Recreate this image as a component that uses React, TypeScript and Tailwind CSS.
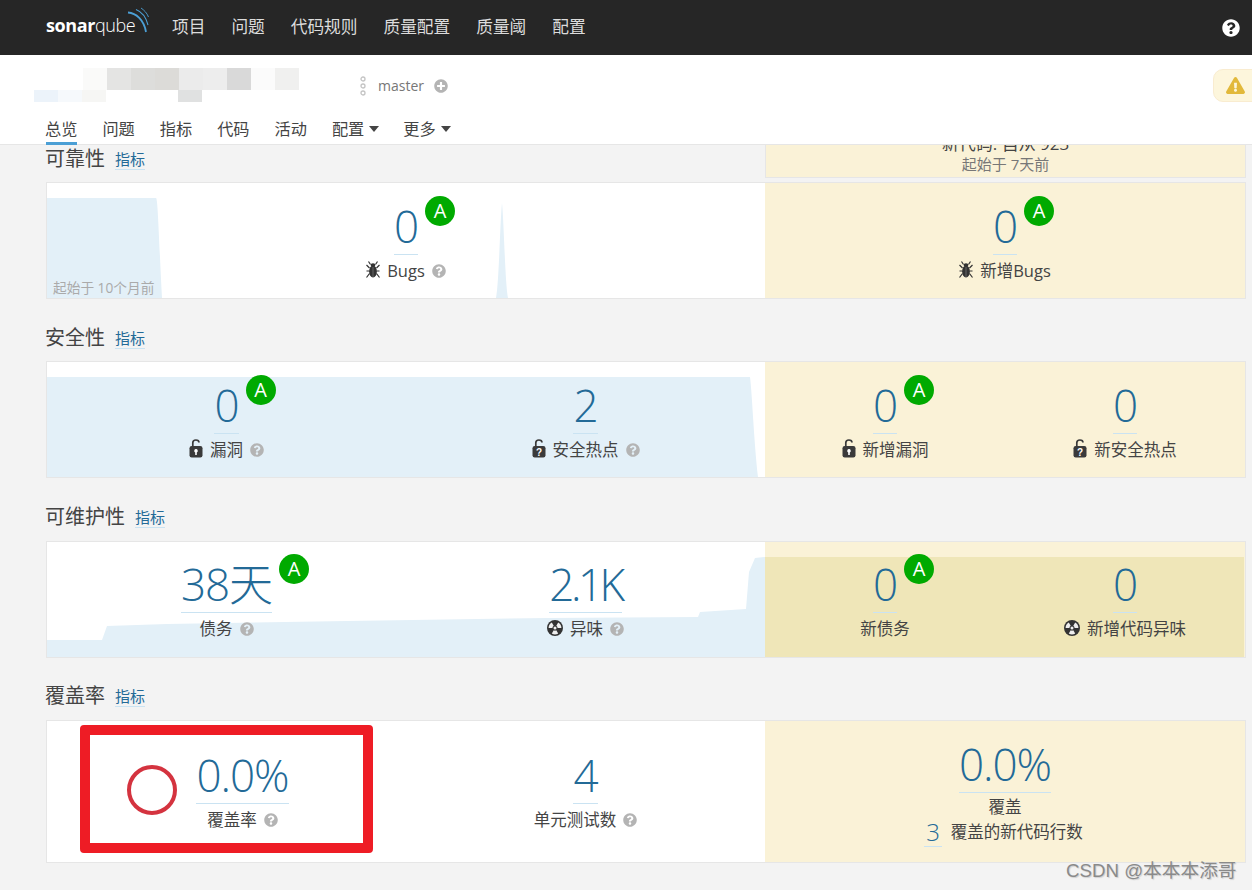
import React from "react";
import { FaQuestionCircle, FaPlusCircle, FaExclamationTriangle } from "react-icons/fa";

const font = { fontFamily: '"Open Sans","Noto Sans CJK SC",sans-serif' };

function Help() {
  return <FaQuestionCircle className="text-[#b4b4b4] text-[14px] shrink-0" />;
}

function Bug() {
  return (
    <svg width="14" height="18" viewBox="0 0 14 18" className="shrink-0 -mt-[3px]" fill="none" stroke="#333" strokeWidth="1.200">
      <path d="M2.500 0.500l2 3M11.500 0.500l-2 3M0.500 4l3 3M13.500 4l-3 3M0.500 10h3M13.500 10h-3M0.500 16.500l3-4M13.500 16.500l-3-4" />
      <ellipse cx="7" cy="4" rx="2.400" ry="1.800" fill="#333" stroke="none" />
      <ellipse cx="7" cy="10.500" rx="3.900" ry="6" fill="#333" stroke="none" />
      <path d="M7 6v10" stroke="#999" strokeWidth="0.500" />
    </svg>
  );
}

function Lock({ q }: { q?: boolean }) {
  return (
    <svg width="14" height="19" viewBox="0 0 14 19" className="shrink-0 -mt-[4px]">
      <path d="M3.800 8V3.800C3.800 2 5 1 6.900 1s3.100 1 3.100 2.600" fill="none" stroke="#3a3a3a" strokeWidth="1.700" />
      <rect x="0.500" y="7" width="13" height="11.500" rx="2.200" fill="#3a3a3a" />
      {q ? (
        <text x="7" y="16.500" textAnchor="middle" fontSize="10" fontWeight="700" fill="#fff" fontFamily="Liberation Sans">?</text>
      ) : (
        <path d="M7 10a1.800 1.800 0 0 1 .8 3.400V16H6.200v-2.600A1.800 1.800 0 0 1 7 10z" fill="#fff" />
      )}
    </svg>
  );
}

function blade(a: number) {
  const p = (r: number, d: number) => {
    const t = ((a + d) * Math.PI) / 180;
    return `${(8 + r * Math.cos(t)).toFixed(2)} ${(8 + r * Math.sin(t)).toFixed(2)}`;
  };
  return `M${p(2.600, -30)}L${p(6.400, -30)}A6.400 6.400 0 0 1 ${p(6.400, 30)}L${p(2.600, 30)}A2.600 2.600 0 0 0 ${p(2.600, -30)}Z`;
}

function Smell() {
  return (
    <svg width="16" height="16" viewBox="0 0 16 16" className="shrink-0 -mt-[3px]">
      <circle cx="8" cy="8" r="8" fill="#333" />
      <path d={blade(-150)} fill="#eee" />
      <path d={blade(-30)} fill="#eee" />
      <path d={blade(90)} fill="#eee" />
      <circle cx="8" cy="8" r="1.500" fill="#eee" />
    </svg>
  );
}

function Grade() {
  return (
    <span className="absolute top-[-2px] left-full ml-[7px] w-[30px] h-[30px] rounded-full bg-[#00aa00] text-white text-[20px] leading-[30px] text-center font-normal tracking-normal">
      A
    </span>
  );
}

function Num({ v, grade, cls = "tracking-[-1px]" }: { v: string; grade?: boolean; cls?: string }) {
  return (
    <span className={`relative inline-block h-[57px] border-b border-[#cae3f2] text-[#236a97] text-[44px] leading-[56px] font-light ${cls}`} style={font}>
      {v}
      {grade && <Grade />}
    </span>
  );
}

function Measure({ v, label, icon, help, grade, pad = "pt-[15px]", cls }: { v: string; label: string; icon?: React.ReactNode; help?: boolean; grade?: boolean; pad?: string; cls?: string }) {
  return (
    <div className={`relative flex-1 flex flex-col items-center ${pad}`}>
      <Num v={v} grade={grade} cls={cls} />
      <div className="mt-[6px] flex items-center gap-[7px] text-[16.500px] leading-[20px] text-[#444]">
        {icon}
        <span>{label}</span>
        {help && <Help />}
      </div>
    </div>
  );
}

function Title({ name, cls }: { name: string; cls: string }) {
  return (
    <div className={`flex items-end gap-[10px] ${cls}`}>
      <h3 className="text-[20px] leading-[28px] font-normal text-[#444] -ml-[1px]">{name}</h3>
      <a className="text-[15px] leading-[20px] text-[#236a97] border-b border-[#cae3f2] mb-[3px]">指标</a>
    </div>
  );
}

function Card({ chart, left, right, cls = "h-[117px]", overlay }: { chart?: React.ReactNode; left: React.ReactNode; right: React.ReactNode; cls?: string; overlay?: boolean }) {
  return (
    <div className={`flex border border-[#e6e6e6] bg-white ${cls}`}>
      <div className="relative w-[718px] flex">
        {chart}
        {left}
      </div>
      <div className="relative flex-1 flex bg-[#faf2d7]">
        {overlay && <div className="absolute left-0 right-[1px] top-[15px] bottom-0 bg-[#efe6b8]" />}
        {right}
      </div>
    </div>
  );
}

function Chart({ d }: { d: string }) {
  return (
    <svg viewBox="0 0 718 115" width="718" height="115" className="absolute left-0 top-0" preserveAspectRatio="none">
      <path d={d} fill="#e3f0f8" />
    </svg>
  );
}

const nav = ["项目", "问题", "代码规则", "质量配置", "质量阈", "配置"];
const mosaic = ["#fafaf9", "#e4e4e3", "#dddddb", "#dcdbd8", "#ebebeb", "#ededed", "#d9d9d9", "#fbfbfb", "#f0f0ef"];

function Caret() {
  return <span className="inline-block ml-[5px] mb-[3px] border-x-[5px] border-x-transparent border-t-[6px] border-t-[#444]" />;
}

export default function App() {
  return (
    <div className="relative h-[890px] w-[1252px] overflow-hidden bg-[#f3f3f3] text-[#444]" style={font}>
      <header className="h-[55px] bg-[#262626] flex items-center pl-[46px]">
        <div className="relative w-[126px] h-[55px] shrink-0">
          <span className="absolute left-0 top-[12px] text-[18px] leading-[26px] text-white tracking-[-0.4px]" style={{ fontFamily: '"Open Sans",sans-serif' }}>
            <b className="font-bold">sonar</b>
            <span className="font-light">qube</span>
          </span>
          <svg width="24" height="30" viewBox="0 0 24 30" className="absolute left-[80px] top-[7px]" fill="none" stroke="#4b9fd5">
            <path d="M2 5.500C10 6 18 13 20 25" strokeWidth="1.800" />
            <path d="M10 2.500C15 4.500 20 10 22 18" strokeWidth="1.100" />
            <path d="M15 1C18 3 21 6 22.500 10" strokeWidth="0.900" />
          </svg>
        </div>
        <nav className="flex gap-[26px] text-[16.700px] text-[#dcdcdc] -mt-[1px]">
          {nav.map((n) => (
            <a key={n}>{n}</a>
          ))}
        </nav>
        <FaQuestionCircle className="ml-auto mr-[12px] text-white text-[18px]" />
      </header>

      <div className="relative z-10 h-[90px] bg-white border-b border-[#e6e6e6]">
        <div className="flex h-[62px] relative">
          <div className="absolute left-[34px] top-[13px] flex flex-col">
            <div className="flex ml-[49px] h-[22px]">
              {mosaic.map((c, i) => (
                <span key={i} className="w-[24px]" style={{ background: c }} />
              ))}
            </div>
            <div className="flex h-[12px]">
              <span className="w-[24px] bg-[#ecf3fa]" />
              <span className="w-[24px] bg-[#f6f9fc]" />
              <span className="w-[24px] bg-[#f6f6f4]" />
              <span className="w-[72px]" />
              <span className="w-[24px] bg-[#e0e1e1]" />
            </div>
          </div>
          <div className="absolute left-[359px] top-[20px] flex items-center text-[14px] leading-[22px] text-[#777]">
            <svg width="8" height="22" viewBox="0 0 8 22" fill="none" stroke="#c4c4c4" strokeWidth="1.300">
              <circle cx="4" cy="4" r="2" />
              <circle cx="4" cy="11" r="2" />
              <circle cx="4" cy="18" r="2" />
            </svg>
            <span className="ml-[11px]">master</span>
            <FaPlusCircle className="ml-[10px] text-[#b4b4b4] text-[14px]" />
          </div>
          <div className="absolute left-[1213px] top-[14px] w-[60px] h-[33px] rounded-[10px] bg-[#fdf6dc] border border-[#f9ecd0] flex items-center pl-[12px]">
            <FaExclamationTriangle className="text-[#e2b93b] text-[19px]" />
          </div>
        </div>
        <div className="flex gap-[25px] pl-[45px] text-[16.200px] leading-[24px] text-[#444]">
          <a className="relative">
            总览
            <span className="absolute left-[1px] right-0 top-[25px] h-[3px] bg-[#4b9fd5]" />
          </a>
          <a>问题</a>
          <a>指标</a>
          <a>代码</a>
          <a>活动</a>
          <a>配置<Caret /></a>
          <a className="-ml-[1px]">更多<Caret /></a>
        </div>
      </div>

      <main className="pl-[46px] w-[1246px]">
        <div className="flex h-[37px]">
          <Title name="可靠性" cls="w-[719px] pb-[9px]" />
          <div className="flex-1 h-[34px] -mt-[1px] border border-[#e6e6e6] bg-[#faf2d7] flex flex-col items-center justify-end overflow-hidden pb-[2px] leading-[21px]">
            <div className="shrink-0 text-[#444] text-[17px]">新代码: 自从 923</div>
            <div className="shrink-0 text-[#777] text-[15px]">起始于 7天前</div>
          </div>
        </div>
        <Card
          chart={
            <>
              <Chart d="M0 15H109C111 15 112 60 115 115H0ZM449 115C452 100 453 40 455 20C457 40 458 100 461 115Z" />
              <span className="absolute left-[6px] top-[95px] text-[13.700px] leading-[20px] text-[#aaa]">起始于 10个月前</span>
            </>
          }
          left={<Measure v="0" label="Bugs" icon={<Bug />} help grade />}
          right={<Measure v="0" label="新增Bugs" icon={<Bug />} grade />}
        />

        <Title name="安全性" cls="h-[62px] pb-[9px]" />
        <Card
          chart={<Chart d="M0 15H703C705 30 707 80 711 115H0Z" />}
          left={
            <>
              <Measure v="0" label="漏洞" icon={<Lock />} help grade />
              <Measure v="2" label="安全热点" icon={<Lock q />} help />
            </>
          }
          right={
            <>
              <Measure v="0" label="新增漏洞" icon={<Lock />} grade />
              <Measure v="0" label="新安全热点" icon={<Lock q />} />
            </>
          }
        />

        <Title name="可维护性" cls="h-[63px] pb-[10px]" />
        <Card
          overlay
          chart={<Chart d="M0 98H55L60 84L120 82L300 79L500 76L651 75L653 70L699 67L702 30L708 16L718 15V115H0Z" />}
          left={
            <>
              <Measure v="38天" label="债务" help grade pad="pt-[14px]" />
              <Measure v="2.1K" label="异味" icon={<Smell />} help pad="pt-[14px]" cls="tracking-[-3.500px]" />
            </>
          }
          right={
            <>
              <Measure v="0" label="新债务" grade pad="pt-[14px]" />
              <Measure v="0" label="新增代码异味" icon={<Smell />} pad="pt-[14px]" />
            </>
          }
        />

        <Title name="覆盖率" cls="h-[62px] pb-[10px]" />
        <Card
          cls="h-[143px]"
          left={
            <>
              <div className="flex-1 flex justify-center relative">
                <div className="absolute left-[80px] top-[44px] w-[50px] h-[50px] rounded-full border-4 border-[#d4333f]" />
                <div className="ml-[32px]">
                  <Measure v="0.0%" label="覆盖率" help pad="pt-[26px]" />
                </div>
              </div>
              <Measure v="4" label="单元测试数" help pad="pt-[26px]" />
            </>
          }
          right={
            <div className="flex-1 flex flex-col items-center pt-[15px]">
              <Num v="0.0%" />
              <div className="mt-[4px] text-[16.500px] leading-[20px]">覆盖</div>
              <div className="mt-[1px] flex items-start gap-[9px] -ml-[3px]">
                <span className="text-[24px] leading-[27px] h-[29px] font-light text-[#236a97] border-b border-[#cae3f2] px-[2px]">3</span>
                <span className="text-[16.500px] leading-[24px] mt-[2px]">覆盖的新代码行数</span>
              </div>
            </div>
          }
        />
      </main>

      <div className="absolute left-[80px] top-[725px] w-[293px] h-[128px] rounded-[4px] border-[10px] border-[#ee1c25]" />
      <div className="absolute left-[1066px] top-[858px] text-[18.700px] leading-[26px] text-[#8a8a8a] whitespace-nowrap" style={{ textShadow: "1px 1px 1px #cfcfcf", fontFamily: '"Liberation Sans","Noto Sans CJK SC",sans-serif' }}>
        CSDN @本本本添哥
      </div>
    </div>
  );
}
